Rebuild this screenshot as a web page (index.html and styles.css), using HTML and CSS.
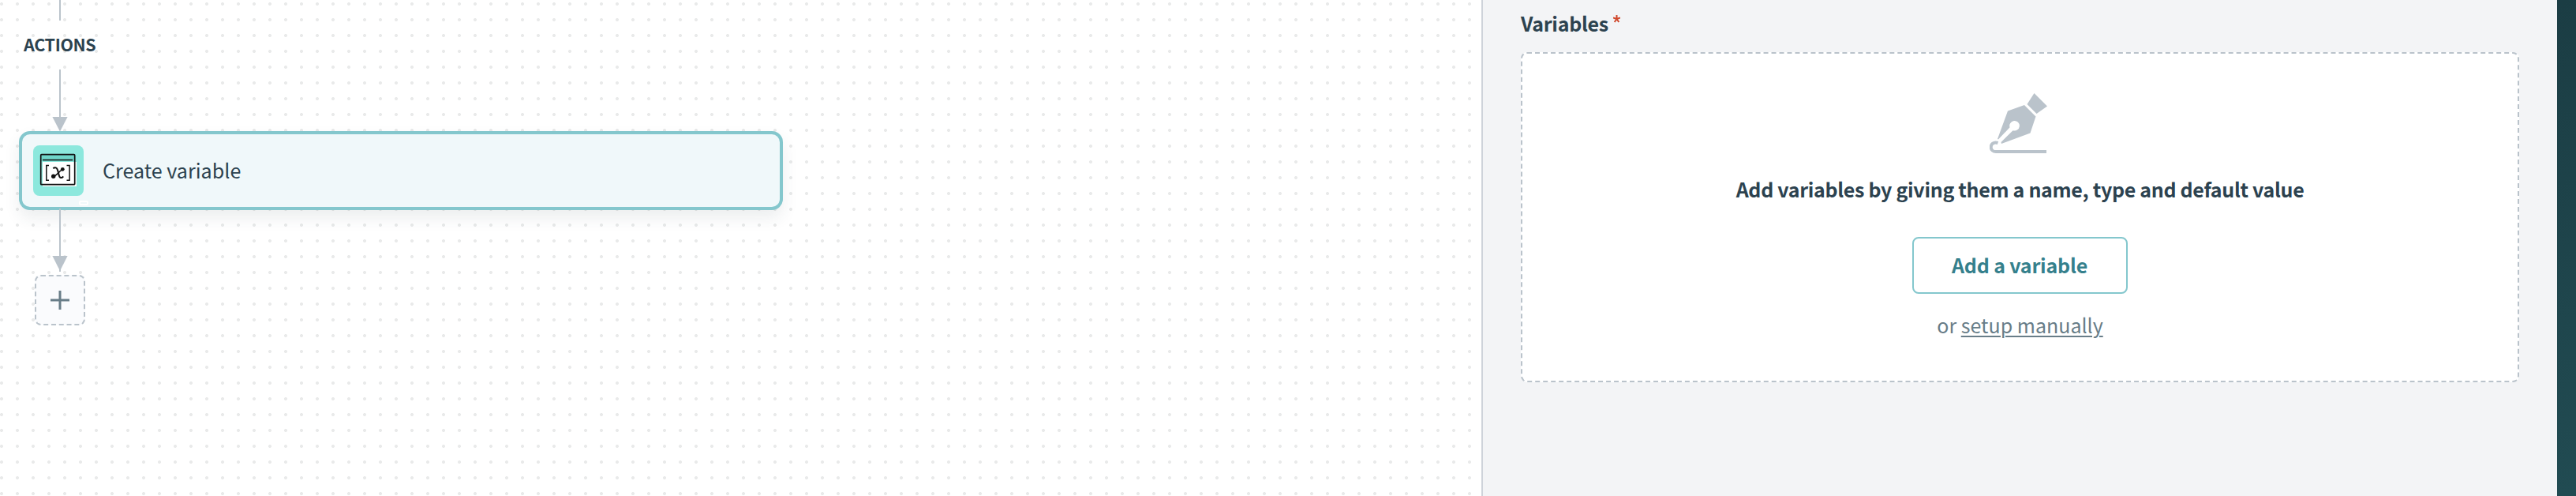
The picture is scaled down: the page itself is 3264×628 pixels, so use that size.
FILE: index.html
```html
<!DOCTYPE html>
<html lang="en">
<head>
<meta charset="utf-8">
<title>Create variable</title>
<link rel="stylesheet" href="styles.css">
</head>
<body>
<div class="app">
  <main class="canvas">
    <div class="stem stem-top"></div>
    <div class="section-label">ACTIONS</div>
    <svg class="arrow" width="20" height="78" viewBox="0 0 20 78"><path d="M9 0h2v60H9z"/><path d="M.4 60h19.2L10 78.500z"/></svg>
    <div class="step">
      <svg class="step-icon" width="64" height="64" viewBox="0 0 64 64">
        <rect width="64" height="64" rx="8" fill="#8ce8dd"/>
        <path d="M12 21h43v31H12z" fill="#fff"/>
        <path d="M10 12h42v8H10z" fill="#6fd5c9"/>
        <rect x="9.700" y="11.700" width="43" height="38" rx="1" fill="none" stroke="#111" stroke-width="1.700"/>
        <path d="M12 18.500h38" stroke="#111" stroke-width="1.700"/>
        <path d="M20 25.500h-3.200v18.800H20M42.500 25.500h3.600v18.800h-3.600" fill="none" stroke="#111" stroke-width="1.500"/>
        <path d="M25.300 29.300c1.800-1.500 4.200-1.300 5.200.8 1.700 3.400 1.500 7.400 3.200 10 1 1.600 3 1.200 4.500-.8" fill="none" stroke="#111" stroke-width="2"/>
        <path d="M37.800 30.300c-4 1-8 8.800-12.700 9.300" fill="none" stroke="#111" stroke-width="1.500"/>
        <circle cx="37.300" cy="30.300" r="2.400" fill="#111"/><circle cx="25.700" cy="39.300" r="2.700" fill="#111"/>
      </svg>
      <span class="step-name">Create variable</span>
      <span class="step-mark"></span>
    </div>
    <svg class="arrow arrow-next" width="20" height="80" viewBox="0 0 20 80"><path d="M9 0h2v80H9z"/><path d="M.4 60h19.200L10 79z"/></svg>
    <button class="add-step" aria-label="Add step">
      <svg width="24" height="24" viewBox="0 0 24 24"><path d="M12 0v24M0 12h24" stroke="#687d88" stroke-width="3"/></svg>
    </button>
  </main>
  <aside class="panel">
    <div class="field-label">Variables<svg class="required" width="9" height="10" viewBox="0 0 9 10"><path d="M4.500 5V0M4.500 5L0 3.500M4.500 5L9 3.500M4.500 5L1.700 9M4.500 5l2.800 4" stroke="#d0482c" stroke-width="2"/></svg></div>
    <section class="empty">
      <svg class="pen" width="74" height="78" viewBox="0 0 74 78" fill="#bac3cb">
        <path d="M56.500 0L73 16.500 59.500 26 47.500 14z"/>
        <path d="M44 15L58.500 29.500 51.500 50.500 15 64l-.5-2L29.500 47.200A6.300 6.300 0 1 0 25.600 43.300L11 58.500l-1-.5L23 22.500z"/>
        <path d="M10.500 63C5 61 1.500 65 1.700 68.500S4.500 74 8 74h64" fill="none" stroke="#bac3cb" stroke-width="4"/>
      </svg>
      <h2 class="empty-title">Add variables by giving them a name, type and default value</h2>
      <button class="add-variable">Add a variable</button>
      <p class="manual">or <a class="manual-link">setup manually</a></p>
    </section>
  </aside>
  <div class="rail"></div>
</div>
</body>
</html>
```
FILE: styles.css
```css
* { box-sizing: border-box; }
body {
  margin: 0;
  overflow: hidden;
  font-family: "Noto Sans CJK SC", "Noto Sans", sans-serif;
  color: #2c424f;
}
.app { display: flex; height: 628px; }
.canvas {
  width: 1877px;
  background: radial-gradient(circle at 2px 5px, #e9eaea 1.7px, transparent 2.300px) 0 0 / 20px 20px #fff;
  display: flex;
  flex-direction: column;
  align-items: flex-start;
}
.stem { width: 2px; height: 26px; margin-left: 75px; background: #bac3cb; }
.section-label {
  height: 62px;
  margin-left: 30px;
  font-size: 21.5px;
  line-height: 59px;
  font-weight: 700;
  letter-spacing: -.35px;
  white-space: nowrap;
}
.arrow { display: block; margin-left: 66px; fill: #bac3cb; }
.step {
  position: relative;
  display: flex;
  align-items: center;
  width: 968px;
  height: 100px;
  margin-left: 24px;
  padding-left: 14px;
  gap: 24px;
  border: 4px solid #84c7cd;
  border-radius: 14px;
  background: #f0f8fa;
  box-shadow: 0 10px 20px rgba(44, 66, 79, .09);
}
.step-name { padding-bottom: 3px; font-size: 25.1px; line-height: 36px; white-space: nowrap; }
.step-mark {
  position: absolute;
  left: 72px;
  bottom: 2px;
  width: 12px;
  height: 6px;
  border: 2px solid #fff;
  border-radius: 2px;
}
.arrow-next { position: relative; margin-top: -2px; }
.add-step {
  display: grid;
  place-items: center;
  width: 64px;
  height: 64px;
  margin: 4px 0 0 44px;
  padding: 0;
  border: 2px dashed #bac3cb;
  border-radius: 8px;
  background: #fafbfd;
}
.panel {
  width: 1363px;
  padding: 0 48px;
  border-left: 2px solid #ced3da;
  background: #f3f4f6;
}
.field-label {
  display: flex;
  height: 66px;
  font-size: 25px;
  line-height: 59px;
  font-weight: 700;
  letter-spacing: -.3px;
}
.required { margin: 19px 0 0 6px; }
.empty {
  display: flex;
  flex-direction: column;
  align-items: center;
  width: 1265px;
  height: 418px;
  padding-top: 50px;
  border: 2px dashed #bac3cb;
  border-radius: 8px;
  background: #fff;
}
.pen { margin-right: 3px; }
.empty-title { margin: 25px 0 0; font-size: 25px; line-height: 36px; font-weight: 700; letter-spacing: -.32px; white-space: nowrap; }
.add-variable {
  width: 273px;
  height: 72px;
  margin: 43px 1px 0 0;
  padding: 0 0 2px;
  border: 2px solid #84c7cd;
  border-radius: 8px;
  background: #fff;
  color: #35808c;
  font: 700 25px/66px "Noto Sans CJK SC", "Noto Sans", sans-serif;
  letter-spacing: -.2px;
}
.manual { margin: 21px 0 0; font-size: 25px; line-height: 36px; color: #687d88; }
.manual-link { text-decoration: underline; text-decoration-thickness: 2px; text-underline-offset: 3px; }
.rail { width: 24px; background: linear-gradient(#1b3d44, #214b52); }
```
